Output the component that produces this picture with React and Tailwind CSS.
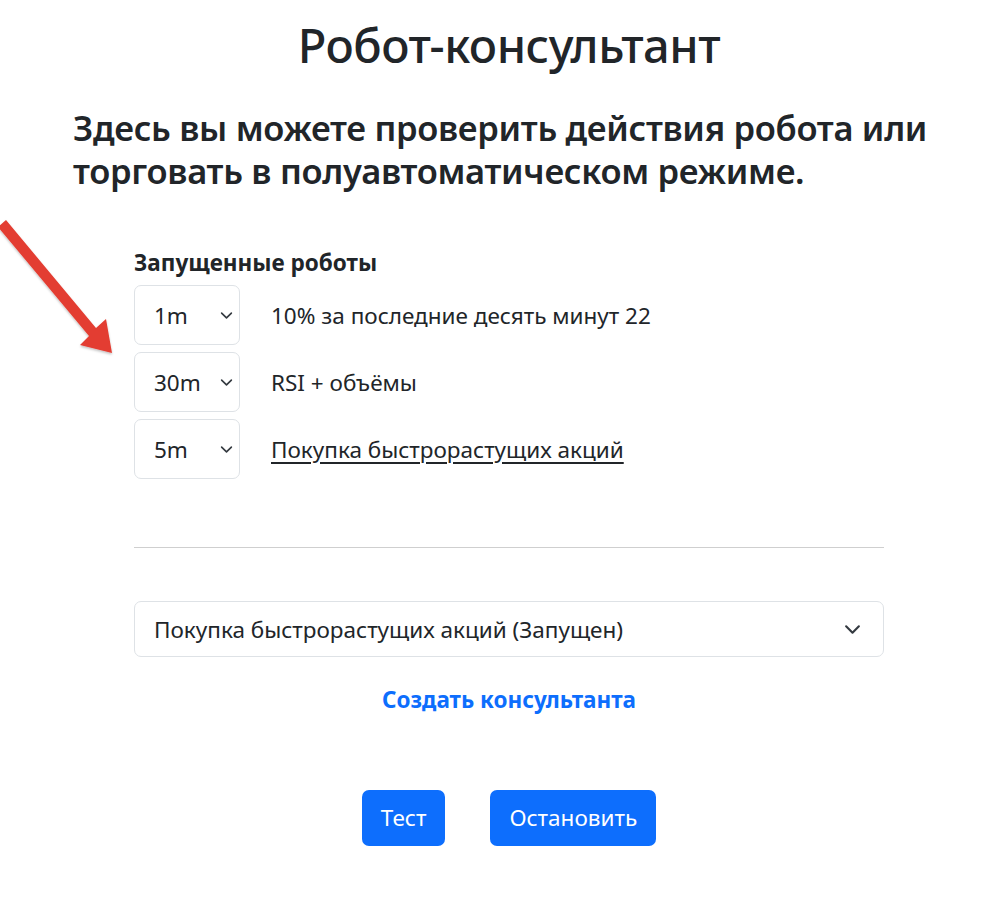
const robots = [
  { tf: '1m', name: '10% за последние десять минут 22', link: false },
  { tf: '30m', name: 'RSI + объёмы', link: false },
  { tf: '5m', name: 'Покупка быстрорастущих акций', link: true },
]

function Chevron({ size = 14 }) {
  return (
    <svg width={size} height={size} viewBox="0 0 16 16" fill="none">
      <path d="m2 5 6 6 6-6" stroke="#343a40" strokeWidth="2" strokeLinecap="round" strokeLinejoin="round" />
    </svg>
  )
}

function Arrow() {
  return (
    <svg className="absolute left-0 top-[216px] pointer-events-none" width="130" height="150" viewBox="0 0 130 150">
      <defs>
        <filter id="sh" x="-20%" y="-20%" width="140%" height="140%">
          <feDropShadow dx="0" dy="1.5" stdDeviation="1" floodColor="#000" floodOpacity="0.25" />
        </filter>
      </defs>
      <g filter="url(#sh)">
        <path d="M-2 11 L6 4 L96 112 L106 103 L112 137 L80 129 L89 120 Z" fill="#e33d31" />
      </g>
    </svg>
  )
}

export default function App() {
  return (
    <div
      className="relative min-h-screen bg-white text-[#212529]"
      style={{ fontFamily: '"Noto Sans", "Open Sans", sans-serif' }}
    >
      <Arrow />
      <div className="ml-[73px] w-[872px] pt-[17px]">
        <h1 className="text-center text-[47px] font-medium leading-[1.2] tracking-[-0.5px]">Робот-консультант</h1>
        <h3 className="mt-[33px] text-[34.5px] font-semibold leading-[43px] tracking-[-0.3px]">
          Здесь вы можете проверить действия робота или торговать в полуавтоматическом режиме.
        </h3>

        <div className="mx-[61px] mt-[59px]">
          <div className="text-[22.5px] font-bold leading-[24px]">Запущенные роботы</div>
          <div className="mt-[10px] flex flex-col gap-[7px]">
            {robots.map((r) => (
              <div key={r.tf} className="flex items-center gap-[31px]">
                <div className="flex h-[60px] w-[106px] items-center justify-between rounded-[7px] border border-[#dee2e6] pl-[19px] pr-[6px] text-[22.5px]">
                  <span>{r.tf}</span>
                  <Chevron size={13} />
                </div>
                {r.link ? (
                  <a href="#" className="text-[22.5px] text-[#212529] underline underline-offset-[4px] decoration-[1.5px]">{r.name}</a>
                ) : (
                  <span className="text-[22.5px]">{r.name}</span>
                )}
              </div>
            ))}
          </div>

          <hr className="mt-[68px] border-t border-[#cfcfcf]" />

          <div className="mt-[53px] flex h-[56px] items-center justify-between rounded-[7px] border border-[#dee2e6] pl-[19px] pr-[22px] text-[22.5px]">
            <span>Покупка быстрорастущих акций (Запущен)</span>
            <Chevron size={17} />
          </div>

          <div className="mt-[26px] text-center">
            <a href="#" className="text-[22.5px] font-bold text-[#0d6efd] no-underline">Создать консультанта</a>
          </div>

          <div className="mt-[73px] flex justify-center gap-[45px]">
            <button className="h-[56px] rounded-[7px] bg-[#0d6efd] px-[19px] text-[22.5px] text-white">Тест</button>
            <button className="h-[56px] rounded-[7px] bg-[#0d6efd] px-[19px] text-[22.5px] text-white">Остановить</button>
          </div>
        </div>
      </div>
    </div>
  )
}
